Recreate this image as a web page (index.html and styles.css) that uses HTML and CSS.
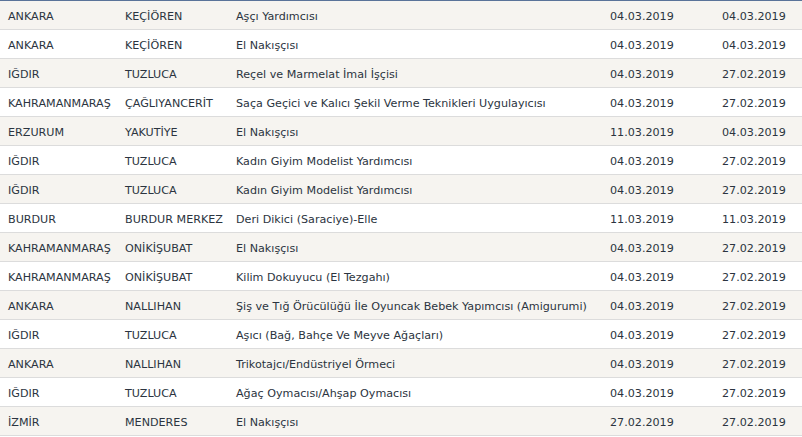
FILE: index.html
```html
<!DOCTYPE html>
<html lang="tr">
<head>
    <meta charset="UTF-8">
    <meta name="viewport" content="width=device-width, initial-scale=1.0">
    <title>Kurslar</title>
    <link rel="stylesheet" href="styles.css">
</head>
<body>
    <table class="kurs-tablo">
        <colgroup>
            <col class="c-il">
            <col class="c-ilce">
            <col class="c-ad">
            <col class="c-tarih">
            <col class="c-tarih2">
        </colgroup>
        <tbody>
            <tr><td>ANKARA</td><td>KEÇİÖREN</td><td>Aşçı Yardımcısı</td><td>04.03.2019</td><td>04.03.2019</td></tr>
            <tr><td>ANKARA</td><td>KEÇİÖREN</td><td>El Nakışçısı</td><td>04.03.2019</td><td>04.03.2019</td></tr>
            <tr><td>IĞDIR</td><td>TUZLUCA</td><td>Reçel ve Marmelat İmal İşçisi</td><td>04.03.2019</td><td>27.02.2019</td></tr>
            <tr><td>KAHRAMANMARAŞ</td><td>ÇAĞLIYANCERİT</td><td>Saça Geçici ve Kalıcı Şekil Verme Teknikleri Uygulayıcısı</td><td>04.03.2019</td><td>27.02.2019</td></tr>
            <tr><td>ERZURUM</td><td>YAKUTİYE</td><td>El Nakışçısı</td><td>11.03.2019</td><td>04.03.2019</td></tr>
            <tr><td>IĞDIR</td><td>TUZLUCA</td><td>Kadın Giyim Modelist Yardımcısı</td><td>04.03.2019</td><td>27.02.2019</td></tr>
            <tr><td>IĞDIR</td><td>TUZLUCA</td><td>Kadın Giyim Modelist Yardımcısı</td><td>04.03.2019</td><td>27.02.2019</td></tr>
            <tr><td>BURDUR</td><td>BURDUR MERKEZ</td><td>Deri Dikici (Saraciye)-Elle</td><td>11.03.2019</td><td>11.03.2019</td></tr>
            <tr><td>KAHRAMANMARAŞ</td><td>ONİKİŞUBAT</td><td>El Nakışçısı</td><td>04.03.2019</td><td>27.02.2019</td></tr>
            <tr><td>KAHRAMANMARAŞ</td><td>ONİKİŞUBAT</td><td>Kilim Dokuyucu (El Tezgahı)</td><td>04.03.2019</td><td>27.02.2019</td></tr>
            <tr><td>ANKARA</td><td>NALLIHAN</td><td>Şiş ve Tığ Örücülüğü İle Oyuncak Bebek Yapımcısı (Amigurumi)</td><td>04.03.2019</td><td>27.02.2019</td></tr>
            <tr><td>IĞDIR</td><td>TUZLUCA</td><td>Aşıcı (Bağ, Bahçe Ve Meyve Ağaçları)</td><td>04.03.2019</td><td>27.02.2019</td></tr>
            <tr><td>ANKARA</td><td>NALLIHAN</td><td>Trikotajcı/Endüstriyel Örmeci</td><td>04.03.2019</td><td>27.02.2019</td></tr>
            <tr><td>IĞDIR</td><td>TUZLUCA</td><td>Ağaç Oymacısı/Ahşap Oymacısı</td><td>04.03.2019</td><td>27.02.2019</td></tr>
            <tr><td>İZMİR</td><td>MENDERES</td><td>El Nakışçısı</td><td>27.02.2019</td><td>27.02.2019</td></tr>
        </tbody>
    </table>
</body>
</html>
```

FILE: styles.css
```css
body {
    margin: 0;
    background-color: #fff;
    font-family: "DejaVu Sans", Verdana, sans-serif;
    font-size: 11.15px;
    color: #2b3440;
}

.kurs-tablo {
    width: 802px;
    table-layout: fixed;
    border-collapse: collapse;
    border-top: 1px solid #5a7399;
    border-right: 1px solid #dcdcdc;
}

.c-il { width: 117px; }
.c-ilce { width: 111px; }
.c-ad { width: 374px; }
.c-tarih { width: 112px; }
.c-tarih2 { width: 88px; }

.kurs-tablo td {
    height: 26px;
    padding: 2px 0 0 8px;
    border-bottom: 1px solid #dcdcdc;
    white-space: nowrap;
    vertical-align: middle;
}

.kurs-tablo tr:nth-child(odd) td {
    background-color: #f6f4f0;
}
```
